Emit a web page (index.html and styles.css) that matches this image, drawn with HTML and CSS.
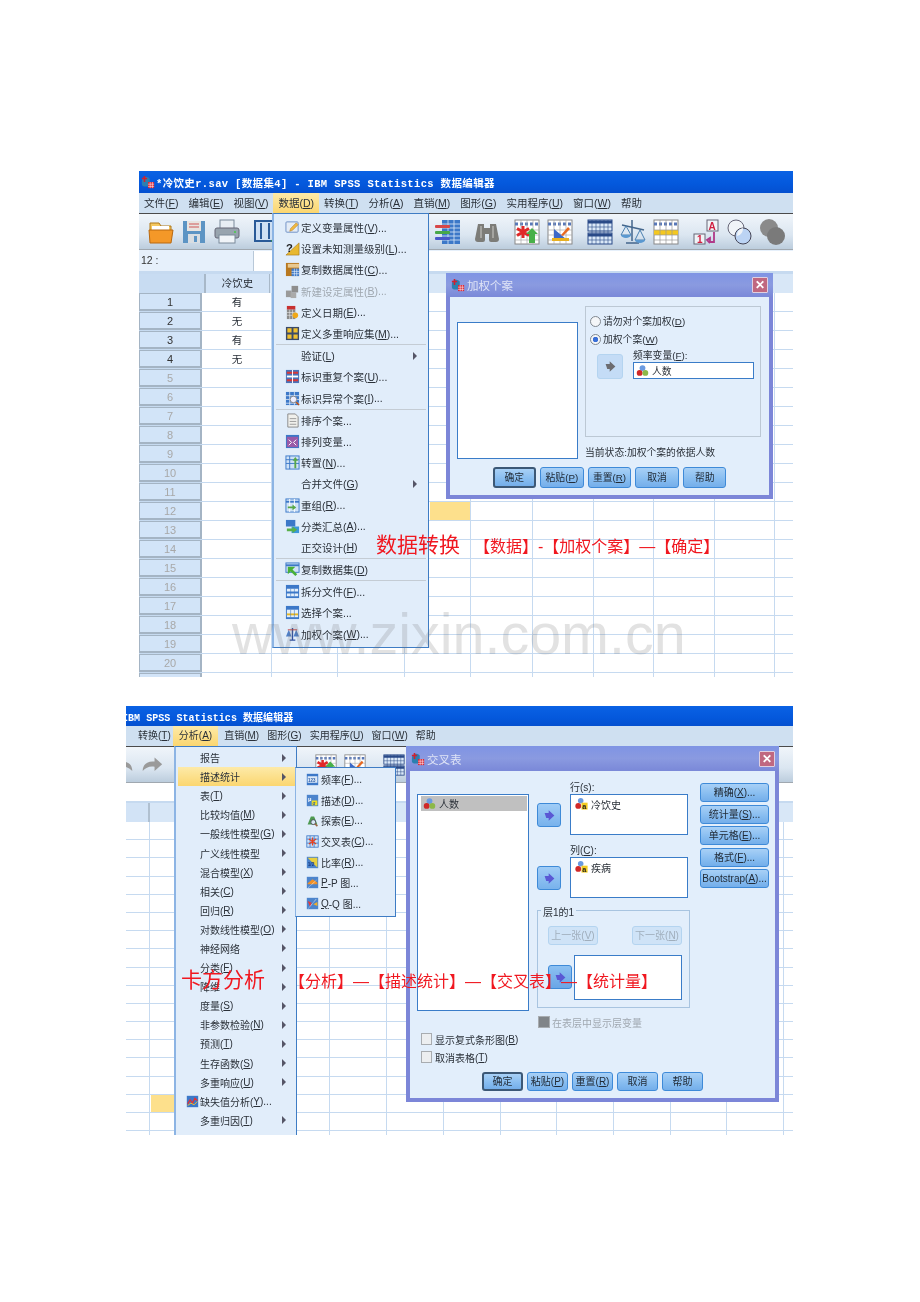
FILE: index.html
```html
<!DOCTYPE html>
<html>
<head>
    <meta charset="utf-8">
    <title>SPSS 数据转换 卡方分析</title>
    <link rel="stylesheet" href="styles.css">
</head>
<body>

<!-- icon set, used with <use> below -->
<svg class="defs" xmlns="http://www.w3.org/2000/svg">
    <symbol id="logo" viewBox="0 0 16 16"><path d="M1 7a5 5 0 0 1 9-3v9H4a3 3 0 0 1-3-3z" fill="#2b7fb0"/><path d="M4 1v7M1 4h6" stroke="#d02030" stroke-width="1.8"/><rect x="8" y="8" width="7" height="7" fill="#d82838"/><path d="M8 10.5h7M8 13h7M10.5 8v7M13 8v7" stroke="#fff" stroke-width=".6"/></symbol>
    <symbol id="ball" viewBox="0 0 16 16"><circle cx="8" cy="5" r="3.6" fill="#6a9ae0"/><circle cx="4.5" cy="11" r="3.6" fill="#d02828"/><circle cx="11.5" cy="11" r="3.6" fill="#8cb848"/></symbol>
    <symbol id="arrow" viewBox="0 0 16 16"><path d="M2 5h5V1.5l7 6.5-7 6.500V11H4z" fill="currentColor"/></symbol>
    <!-- menu icons -->
    <symbol id="m-var" viewBox="0 0 16 16"><rect x="1" y="2" width="13" height="11" rx="1" fill="#e4ecf6" stroke="#6d8fc4"/><path d="M5 12l1-3 6-6 2 2-6 6z" fill="#f0b840" stroke="#b07820" stroke-width=".5"/></symbol>
    <symbol id="m-copy" viewBox="0 0 16 16"><rect x="1" y="1" width="14" height="14" fill="#b87820"/><rect x="3" y="2" width="12" height="4" fill="#e8c890"/><rect x="7" y="7" width="8" height="8" fill="#3c78c8"/><path d="M7 10h8M7 12.5h8M10 7v8M12.5 7v8" stroke="#fff" stroke-width=".6"/></symbol>
    <symbol id="m-new" viewBox="0 0 16 16"><rect x="1" y="7" width="6" height="7" fill="#9a9a9a"/><rect x="6" y="9" width="6" height="6" fill="#aaa"/><rect x="7" y="2" width="7" height="7" fill="#8e8e8e"/></symbol>
    <symbol id="m-date" viewBox="0 0 16 16"><rect x="2" y="1" width="9" height="4" fill="#c83030"/><rect x="2" y="5" width="9" height="10" fill="#8a8a8a"/><path d="M2 8h9M2 11h9M5 5v10M8 5v10" stroke="#eee" stroke-width=".6"/><circle cx="11" cy="11" r="3" fill="#f0a818"/></symbol>
    <symbol id="m-mult" viewBox="0 0 16 16"><rect x="1" y="1" width="14" height="14" fill="#3a4a6a"/><path d="M2.5 2.5h4.5v4.5H2.5zM9 2.5h4.5v4.5H9zM2.5 9h4.5v4.5H2.5zM9 9h4.5v4.5H9z" fill="#f0c030"/></symbol>
    <symbol id="m-dup" viewBox="0 0 16 16"><rect x="1" y="1" width="14" height="14" fill="#4a72b8"/><path d="M2 3h12v2H2zM2 11h12v2H2z" fill="#d83838"/><path d="M2 7h12v2H2z" fill="#fff"/><path d="M8 1v14" stroke="#fff"/></symbol>
    <symbol id="m-odd" viewBox="0 0 16 16"><rect x="1" y="1" width="14" height="14" fill="#3c78c8"/><path d="M1 5h14M1 9h14M1 13h14M5 1v14M10 1v14" stroke="#fff" stroke-width=".7"/><circle cx="9" cy="9" r="3.5" fill="#eef" stroke="#888"/><path d="M12 12l3 3" stroke="#c05010" stroke-width="1.6"/></symbol>
    <symbol id="m-sort" viewBox="0 0 16 16"><path d="M3 1h8l3 3v11H3z" fill="#f0f0ec" stroke="#888"/><path d="M5 6h7M5 9h7M5 12h7" stroke="#999"/></symbol>
    <symbol id="m-rank" viewBox="0 0 16 16"><rect x="1" y="1" width="14" height="14" fill="#3c78c8"/><rect x="2" y="3" width="12" height="11" fill="#9a5aa8"/><path d="M4 6l3 3-3 3M12 6L9 9l3 3" stroke="#fff" fill="none"/></symbol>
    <symbol id="m-trans" viewBox="0 0 16 16"><rect x="1" y="1" width="14" height="14" fill="#cfe2f6" stroke="#3c78c8"/><path d="M1 5h14M1 9h14M5 1v14" stroke="#3c78c8"/><path d="M10 14V6H8l3-4 3 4h-2v8z" fill="#58a848"/></symbol>
    <symbol id="m-regroup" viewBox="0 0 16 16"><rect x="1" y="1" width="14" height="14" fill="#cfe2f6" stroke="#3c78c8"/><path d="M1 4h14" stroke="#3c78c8" stroke-width="2"/><path d="M5 1v14M10 1v14" stroke="#fff"/><path d="M3 9h5V7l4 3-4 3v-2H3z" fill="#58a848"/></symbol>
    <symbol id="m-agg" viewBox="0 0 16 16"><rect x="1" y="1" width="10" height="7" fill="#3c78c8"/><rect x="7" y="8" width="8" height="7" fill="#3c98d8"/><path d="M2 10h6V8l5 3.5L8 15v-2H2z" fill="#58b048"/></symbol>
    <symbol id="m-set" viewBox="0 0 16 16"><rect x="1" y="1" width="14" height="10" fill="#cfe2f6" stroke="#3c78c8"/><path d="M1 3.500h14" stroke="#3c78c8" stroke-width="2"/><path d="M3 5h8l-3 3 5 5-2 2-5-5-3 3z" fill="#48b038"/></symbol>
    <symbol id="m-split" viewBox="0 0 16 16"><rect x="1" y="1" width="14" height="14" fill="#3c78c8"/><path d="M2 5h12v3H2zM2 10h12v3H2z" fill="#e4effa"/><path d="M6 5v8M10 5v8" stroke="#3c78c8" stroke-width=".6"/></symbol>
    <symbol id="m-select" viewBox="0 0 16 16"><rect x="1" y="1" width="14" height="14" fill="#3c78c8"/><path d="M2 5h12v8H2z" fill="#e4effa"/><path d="M2 9h12v2H2z" fill="#e8b820"/><path d="M6 5v8M10 5v8" stroke="#3c78c8" stroke-width=".6"/></symbol>
    <symbol id="m-weight" viewBox="0 0 16 16"><path d="M8 1v13M5 14h6" stroke="#3050a0" stroke-width="1.4"/><path d="M4 3L1 10h6zM12 3l-3 7h6z" fill="#5080c8"/><path d="M3 3h10" stroke="#c04040"/></symbol>
    <symbol id="m-miss" viewBox="0 0 16 16"><rect x="1" y="1" width="14" height="14" fill="#3c78c8"/><path d="M2 11l3-5 3 4 3-6 3 3" stroke="#e83030" stroke-width="1.5" fill="none"/><path d="M2 13l4-3 4 2 4-4" stroke="#f0c030" stroke-width="1.2" fill="none"/></symbol>
    <symbol id="s-explore" viewBox="0 0 16 16"><path d="M2 13l4-10h4l4 10z" fill="#4e9a50"/><circle cx="9" cy="10" r="3" fill="#d8e8f4" stroke="#445"/><path d="M11 12l3 3" stroke="#964" stroke-width="2"/></symbol>
    <symbol id="s-cross" viewBox="0 0 16 16"><rect x="1" y="1" width="14" height="14" fill="#cfe2f6" stroke="#3c78c8"/><path d="M1 5h14M1 10h14M5 1v14M10 1v14" stroke="#3c78c8"/><path d="M8 3v10M3.500 5l9 6M12.500 5l-9 6" stroke="#e84020" stroke-width="1.5"/></symbol>
    <symbol id="s-pp" viewBox="0 0 16 16"><rect x="1" y="1" width="14" height="14" fill="#4c84cc"/><path d="M2 9l6-5 6 4v2H2z" fill="#f09028"/><path d="M3 14l10-9" stroke="#fff" stroke-dasharray="1 1"/></symbol>
    <symbol id="s-qq" viewBox="0 0 16 16"><rect x="1" y="1" width="14" height="14" fill="#4c84cc"/><path d="M2 5l5 2-2 5z" fill="#e83838"/><path d="M9 9l5-3v5z" fill="#f0b028"/><path d="M3 14l10-12" stroke="#fff" stroke-dasharray="1 1"/></symbol>
    <!-- toolbar icons -->
    <symbol id="t-open" viewBox="0 0 26 26"><path d="M2 4h9l2 3h10v5H2z" fill="#f4c860" stroke="#b07818"/><path d="M4 7h17v4H4z" fill="#fff"/><path d="M1 11h24l-2 13H2z" fill="#f49828" stroke="#b86810"/></symbol>
    <symbol id="t-save" viewBox="0 0 26 26"><path d="M2 2h22v22H2z" fill="#5c94c4"/><rect x="6" y="2" width="14" height="10" fill="#e8e4e0"/><path d="M8 5h10M8 8h10" stroke="#d05858"/><rect x="7" y="15" width="12" height="9" fill="#d8dde2"/><rect x="13" y="17" width="3" height="6" fill="#5c94c4"/></symbol>
    <symbol id="t-print" viewBox="0 0 26 26"><rect x="6" y="1" width="14" height="10" fill="#e8eef4" stroke="#7a8a9a"/><rect x="1" y="9" width="24" height="10" rx="2" fill="#98a4ae" stroke="#667"/><circle cx="21" cy="13" r="1" fill="#4c4"/><rect x="5" y="16" width="16" height="8" fill="#f0f4f8" stroke="#7a8a9a"/></symbol>
    <symbol id="t-vars" viewBox="0 0 26 26"><rect x="1" y="2" width="22" height="20" fill="#cfe0f4" stroke="#2a5a98" stroke-width="2"/><path d="M7 4v16M15 4v16" stroke="#2a5a98" stroke-width="2"/><path d="M17 22l4-6 4 6-4 3z" fill="#38a038"/></symbol>
    <symbol id="t-cols" viewBox="0 0 26 26"><rect x="8" y="1" width="18" height="24" fill="#3c78c8"/><path d="M8 5h18M8 9h18M8 13h18M8 17h18M8 21h18M14 1v24M20 1v24" stroke="#dbe9f8" stroke-width=".8"/><rect x="1" y="6" width="15" height="3" rx="1" fill="#d84848"/><rect x="1" y="12" width="15" height="3" rx="1" fill="#48a848"/><rect x="1" y="18" width="15" height="3" rx="1" fill="#4858c8"/></symbol>
    <symbol id="t-bino" viewBox="0 0 26 26"><path d="M4 5h6v4h6V5h6l3 15a3 3 0 0 1-3 3h-5a2 2 0 0 1-2-2v-6h-4v6a2 2 0 0 1-2 2H4a3 3 0 0 1-3-3z" fill="#7c7c78"/><path d="M6 7h2v12H6zM18 7h2v12h-2z" fill="#a4a4a0"/></symbol>
    <symbol id="t-star" viewBox="0 0 26 26"><rect x="1" y="1" width="24" height="24" fill="#fff" stroke="#888"/><path d="M1 5h24" stroke="#5878b8" stroke-width="3" stroke-dasharray="3 2"/><path d="M1 11h24M1 16h24M1 21h24M7 1v24M13 1v24M19 1v24" stroke="#aaa" stroke-width=".7"/><path d="M9 7v12M3 9.5l12 7M15 9.5l-12 7" stroke="#e02828" stroke-width="3"/><path d="M15 24V15h-3l6-6 6 6h-3v9z" fill="#48b048"/></symbol>
    <symbol id="t-chart" viewBox="0 0 26 26"><rect x="1" y="1" width="24" height="24" fill="#fff" stroke="#888"/><path d="M1 5h24" stroke="#5878b8" stroke-width="3" stroke-dasharray="3 2"/><path d="M1 11h24M1 16h24M1 21h24M7 1v24M13 1v24M19 1v24" stroke="#aaa" stroke-width=".7"/><path d="M7 10v10h12z" fill="#3c68c8"/><path d="M5 19h17v3H5z" fill="#e8b020"/><path d="M14 16l7-8 2 2-7 7z" fill="#e86820"/></symbol>
    <symbol id="t-tables" viewBox="0 0 26 26"><rect x="1" y="1" width="24" height="11" fill="#dbe9f8" stroke="#2a4a88"/><rect x="1" y="14" width="24" height="11" fill="#dbe9f8" stroke="#2a4a88"/><path d="M1 3h24M1 16h24" stroke="#2a4a88" stroke-width="3"/><path d="M1 8h24M1 21h24M5 1v24M9 1v24M13 1v24M17 1v24M21 1v24" stroke="#2a4a88" stroke-width=".6"/></symbol>
    <symbol id="t-scale" viewBox="0 0 26 26"><path d="M12 1v21M6 24h13" stroke="#44668c" stroke-width="1.5"/><path d="M2 6l22 5" stroke="#44668c" stroke-width="1.5"/><path d="M6 7L1 16h10zM20 11l-5 10h10z" fill="none" stroke="#4a80b0"/><path d="M1 16h10a5 3 0 0 1-10 0zM15 21h10a5 3 0 0 1-10 0z" fill="#5a98d0"/></symbol>
    <symbol id="t-yellow" viewBox="0 0 26 26"><rect x="1" y="1" width="24" height="24" fill="#fff" stroke="#888"/><path d="M1 5h24" stroke="#5878b8" stroke-width="3" stroke-dasharray="3 2"/><path d="M1 11h24v5H1z" fill="#f4c820"/><path d="M1 11h24M1 16h24M1 21h24M7 1v24M13 1v24M19 1v24" stroke="#999" stroke-width=".7"/></symbol>
    <symbol id="t-circ" viewBox="0 0 26 26"><circle cx="10" cy="9" r="8" fill="#f0f4f8" stroke="#667"/><circle cx="17" cy="17" r="8" fill="#bcd4f4" stroke="#445"/><path d="M11 17a8 8 0 0 1 6-8 8 8 0 0 1-6 8" fill="#f0f4f8"/></symbol>
    <symbol id="t-grey" viewBox="0 0 26 26"><circle cx="10" cy="9" r="9" fill="#8a8a8a"/><circle cx="17" cy="17" r="9" fill="#7a7a7a"/></symbol>
    <symbol id="t-redo" viewBox="0 0 26 26"><path d="M2 20c0-8 6-12 14-11V4l9 8-9 8v-5c-6-1-10 1-14 5z" fill="#9a9a9a"/></symbol>
    <symbol id="t-undo" viewBox="0 0 26 26"><path d="M24 20c0-8-6-12-14-11V4l-9 8 9 8v-5c6-1 10 1 14 5z" fill="#9a9a9a"/></symbol>
</svg>

<!-- first screenshot: 数据转换 -->
<div class="shot shot-a">
    <div class="titlebar"><svg class="logo"><use href="#logo"/></svg><span>*冷饮史r.sav [数据集4] - IBM SPSS Statistics 数据编辑器</span></div>
    <div class="menubar">
        <span>文件(<u>F</u>)</span><span>编辑(<u>E</u>)</span><span>视图(<u>V</u>)</span><span class="on">数据(<u>D</u>)</span><span>转换(<u>T</u>)</span><span>分析(<u>A</u>)</span><span>直销(<u>M</u>)</span><span>图形(<u>G</u>)</span><span>实用程序(<u>U</u>)</span><span>窗口(<u>W</u>)</span><span>帮助</span>
    </div>
    <div class="toolbar">
        <svg class="tb"><use href="#t-open"/></svg>
        <svg class="tb"><use href="#t-save"/></svg>
        <svg class="tb"><use href="#t-print"/></svg>
        <svg class="tb sep"><use href="#t-vars"/></svg>
        <svg class="tb far"><use href="#t-cols"/></svg>
        <svg class="tb sep"><use href="#t-bino"/></svg>
        <svg class="tb sep"><use href="#t-star"/></svg>
        <svg class="tb"><use href="#t-chart"/></svg>
        <svg class="tb sep"><use href="#t-tables"/></svg>
        <svg class="tb"><use href="#t-scale"/></svg>
        <svg class="tb"><use href="#t-yellow"/></svg>
        <svg class="tb sep" viewBox="0 0 26 26"><rect x="14" y="1" width="11" height="11" fill="#f0f4f8" stroke="#667"/><text x="15.5" y="10.5" class="svg-red">A</text><rect x="1" y="15" width="11" height="10" fill="#f0f4f8" stroke="#667"/><text x="4" y="24" class="svg-red">1</text><path d="M21 13v10h-4v-4l-3 2 3 3" stroke="#b03888" stroke-width="1.8" fill="none"/></svg>
        <svg class="tb"><use href="#t-circ"/></svg>
        <svg class="tb"><use href="#t-grey"/></svg>
    </div>
    <div class="formula"><span class="cellref">12 :</span><span class="cellval"></span></div>
    <div class="sheethead">
        <span class="corner"></span><span class="colname">冷饮史</span><span class="colrest"></span>
    </div>
    <div class="rows">
        <div class="row"><span class="rh">1</span><span class="c">有</span></div>
        <div class="row"><span class="rh">2</span><span class="c">无</span></div>
        <div class="row"><span class="rh">3</span><span class="c">有</span></div>
        <div class="row"><span class="rh">4</span><span class="c">无</span></div>
        <div class="row"><span class="rh off">5</span></div>
        <div class="row"><span class="rh off">6</span></div>
        <div class="row"><span class="rh off">7</span></div>
        <div class="row"><span class="rh off">8</span></div>
        <div class="row"><span class="rh off">9</span></div>
        <div class="row"><span class="rh off">10</span></div>
        <div class="row"><span class="rh off">11</span></div>
        <div class="row"><span class="rh off">12</span><span class="picked"></span></div>
        <div class="row"><span class="rh off">13</span></div>
        <div class="row"><span class="rh off">14</span></div>
        <div class="row"><span class="rh off">15</span></div>
        <div class="row"><span class="rh off">16</span></div>
        <div class="row"><span class="rh off">17</span></div>
        <div class="row"><span class="rh off">18</span></div>
        <div class="row"><span class="rh off">19</span></div>
        <div class="row"><span class="rh off">20</span></div>
        <div class="row"><span class="rh off"></span></div>
    </div>

    <div class="menu data-menu">
        <div class="mi"><svg class="mico"><use href="#m-var"/></svg>定义变量属性(<u>V</u>)...</div>
        <div class="mi"><svg class="mico" viewBox="0 0 16 16"><path d="M1 15h14V2z" fill="#e8b830" stroke="#a07010" stroke-width=".6"/><text x="1" y="12" class="svg-q">?</text></svg>设置未知测量级别(<u>L</u>)...</div>
        <div class="mi"><svg class="mico"><use href="#m-copy"/></svg>复制数据属性(<u>C</u>)...</div>
        <div class="mi off"><svg class="mico"><use href="#m-new"/></svg>新建设定属性(<u>B</u>)...</div>
        <div class="mi"><svg class="mico"><use href="#m-date"/></svg>定义日期(<u>E</u>)...</div>
        <div class="mi"><svg class="mico"><use href="#m-mult"/></svg>定义多重响应集(<u>M</u>)...</div>
        <hr>
        <div class="mi sub"><span class="mico"></span>验证(<u>L</u>)</div>
        <div class="mi"><svg class="mico"><use href="#m-dup"/></svg>标识重复个案(<u>U</u>)...</div>
        <div class="mi"><svg class="mico"><use href="#m-odd"/></svg>标识异常个案(<u>I</u>)...</div>
        <hr>
        <div class="mi"><svg class="mico"><use href="#m-sort"/></svg>排序个案...</div>
        <div class="mi"><svg class="mico"><use href="#m-rank"/></svg>排列变量...</div>
        <div class="mi"><svg class="mico"><use href="#m-trans"/></svg>转置(<u>N</u>)...</div>
        <div class="mi sub"><span class="mico"></span>合并文件(<u>G</u>)</div>
        <div class="mi"><svg class="mico"><use href="#m-regroup"/></svg>重组(<u>R</u>)...</div>
        <div class="mi"><svg class="mico"><use href="#m-agg"/></svg>分类汇总(<u>A</u>)...</div>
        <div class="mi"><span class="mico"></span>正交设计(<u>H</u>)</div>
        <hr>
        <div class="mi"><svg class="mico"><use href="#m-set"/></svg>复制数据集(<u>D</u>)</div>
        <hr>
        <div class="mi"><svg class="mico"><use href="#m-split"/></svg>拆分文件(<u>F</u>)...</div>
        <div class="mi"><svg class="mico"><use href="#m-select"/></svg>选择个案...</div>
        <div class="mi"><svg class="mico"><use href="#m-weight"/></svg>加权个案(<u>W</u>)...</div>
    </div>

    <div class="dialog weight-dlg">
        <div class="dlg-title"><svg class="logo"><use href="#logo"/></svg><span>加权个案</span><b class="close">✕</b></div>
        <div class="weight-body">
            <div class="weight-top">
                <div class="listbox weight-list"></div>
                <div class="weight-right">
                    <div class="groupbox">
                        <label class="radio"><i class="dot"></i>请勿对个案加权(<u>D</u>)</label>
                        <label class="radio"><i class="dot sel"></i>加权个案(<u>W</u>)</label>
                        <div class="freq">
                            <span class="arrbtn pale"><svg class="arr"><use href="#arrow"/></svg></span>
                            <div class="freq-field">
                                <div class="lbl">频率变量(<u>F</u>):</div>
                                <div class="inputbox"><svg class="varico"><use href="#ball"/></svg>人数</div>
                            </div>
                        </div>
                    </div>
                    <div class="status">当前状态:加权个案的依据人数</div>
                </div>
            </div>
            <div class="btnrow">
                <span class="btn def">确定</span><span class="btn">粘贴(<u>P</u>)</span><span class="btn">重置(<u>R</u>)</span><span class="btn">取消</span><span class="btn">帮助</span>
            </div>
        </div>
    </div>

    <div class="note note-a"><span class="note-big">数据转换</span><span class="note-path">【数据】-【加权个案】—【确定】</span></div>
    <div class="watermark">www.zixin.com.cn</div>
</div>

<!-- second screenshot: 卡方分析 -->
<div class="shot shot-b">
    <div class="titlebar"><span class="cut">IBM SPSS Statistics 数据编辑器</span></div>
    <div class="menubar">
        <span>转换(<u>T</u>)</span><span class="on">分析(<u>A</u>)</span><span>直销(<u>M</u>)</span><span>图形(<u>G</u>)</span><span>实用程序(<u>U</u>)</span><span>窗口(<u>W</u>)</span><span>帮助</span>
    </div>
    <div class="toolbar">
        <svg class="tb"><use href="#t-undo"/></svg>
        <svg class="tb"><use href="#t-redo"/></svg>
        <svg class="tb far"><use href="#t-bino"/></svg>
        <svg class="tb sep"><use href="#t-star"/></svg>
        <svg class="tb"><use href="#t-chart"/></svg>
        <svg class="tb sep"><use href="#t-tables"/></svg>
    </div>
    <div class="formula"></div>
    <div class="sheethead">
        <span class="corner"></span><span class="colrest"></span>
    </div>
    <div class="rows">
        <div class="row"></div><div class="row"></div><div class="row"></div><div class="row"></div><div class="row"></div><div class="row"></div>
        <div class="row"></div><div class="row"></div><div class="row"></div><div class="row"></div><div class="row"></div><div class="row"></div>
        <div class="row"></div><div class="row"></div><div class="row"></div>
        <div class="row"><span class="picked"></span></div>
        <div class="row"></div><div class="row"></div>
    </div>

    <div class="menu analyze-menu">
        <div class="mi sub">报告</div>
        <div class="mi sub hot">描述统计</div>
        <div class="mi sub">表(<u>T</u>)</div>
        <div class="mi sub">比较均值(<u>M</u>)</div>
        <div class="mi sub">一般线性模型(<u>G</u>)</div>
        <div class="mi sub">广义线性模型</div>
        <div class="mi sub">混合模型(<u>X</u>)</div>
        <div class="mi sub">相关(<u>C</u>)</div>
        <div class="mi sub">回归(<u>R</u>)</div>
        <div class="mi sub">对数线性模型(<u>O</u>)</div>
        <div class="mi sub">神经网络</div>
        <div class="mi sub">分类(<u>F</u>)</div>
        <div class="mi sub">降维</div>
        <div class="mi sub">度量(<u>S</u>)</div>
        <div class="mi sub">非参数检验(<u>N</u>)</div>
        <div class="mi sub">预测(<u>T</u>)</div>
        <div class="mi sub">生存函数(<u>S</u>)</div>
        <div class="mi sub">多重响应(<u>U</u>)</div>
        <div class="mi miss"><svg class="mico"><use href="#m-miss"/></svg>缺失值分析(<u>Y</u>)...</div>
        <div class="mi sub">多重归因(<u>T</u>)</div>
        <div class="mi sub">复杂抽样</div>
    </div>

    <div class="menu stats-menu">
        <div class="mi"><svg class="mico" viewBox="0 0 16 16"><rect x="1" y="1" width="14" height="14" fill="#3c78c8"/><rect x="2" y="4" width="12" height="8" fill="#dde9f7"/><text x="2.5" y="10.5" class="svg-n">123</text></svg>频率(<u>F</u>)...</div>
        <div class="mi"><svg class="mico" viewBox="0 0 16 16"><rect x="1" y="1" width="14" height="14" fill="#4c84cc"/><rect x="7" y="8" width="7" height="6" fill="#f0e020"/><text x="2.5" y="8" class="svg-w">μ</text><text x="8" y="13.5" class="svg-n">σ</text></svg>描述(<u>D</u>)...</div>
        <div class="mi"><svg class="mico"><use href="#s-explore"/></svg>探索(<u>E</u>)...</div>
        <div class="mi"><svg class="mico"><use href="#s-cross"/></svg>交叉表(<u>C</u>)...</div>
        <div class="mi"><svg class="mico" viewBox="0 0 16 16"><rect x="1" y="1" width="14" height="14" fill="#4c84cc"/><path d="M2 2h12v12z" fill="#e8d040"/><text x="2" y="12" class="svg-d">1/2</text></svg>比率(<u>R</u>)...</div>
        <div class="mi"><svg class="mico"><use href="#s-pp"/></svg><u>P</u>-P 图...</div>
        <div class="mi"><svg class="mico"><use href="#s-qq"/></svg><u>Q</u>-Q 图...</div>
    </div>

    <div class="dialog cross-dlg">
        <div class="dlg-title"><svg class="logo"><use href="#logo"/></svg><span>交叉表</span><b class="close">✕</b></div>
        <div class="cross-body">
            <div class="cross-main">
                <div class="listbox cross-list"><div class="listrow"><svg class="varico"><use href="#ball"/></svg>人数</div></div>
                <div class="cross-mid">
                    <div class="slot">
                        <span class="arrbtn"><svg class="arr"><use href="#arrow"/></svg></span>
                        <div class="slot-field">
                            <div class="lbl">行(s):</div>
                            <div class="listbox slotbox"><svg class="varico" viewBox="0 0 16 16"><circle cx="7" cy="4.5" r="3.4" fill="#6a9ae0"/><circle cx="4" cy="11" r="3.6" fill="#d02828"/><rect x="8" y="7" width="7.5" height="8.5" fill="#f4cc20"/><text x="9" y="14.5" class="svg-a">a</text></svg>冷饮史</div>
                        </div>
                    </div>
                    <div class="slot slot-next">
                        <span class="arrbtn"><svg class="arr"><use href="#arrow"/></svg></span>
                        <div class="slot-field">
                            <div class="lbl">列(<u>C</u>):</div>
                            <div class="listbox slotbox"><svg class="varico" viewBox="0 0 16 16"><circle cx="7" cy="4.5" r="3.4" fill="#6a9ae0"/><circle cx="4" cy="11" r="3.6" fill="#d02828"/><rect x="8" y="7" width="7.5" height="8.5" fill="#f4cc20"/><text x="9" y="14.5" class="svg-a">a</text></svg>疾病</div>
                        </div>
                    </div>
                    <div class="layer">
                        <span class="legend">层1的1</span>
                        <div class="layer-nav"><span class="btn dim">上一张(<u>V</u>)</span><span class="btn dim">下一张(<u>N</u>)</span></div>
                        <div class="layer-slot">
                            <span class="arrbtn"><svg class="arr"><use href="#arrow"/></svg></span>
                            <div class="listbox layerbox"></div>
                        </div>
                    </div>
                    <label class="check dim-check"><i class="box grey"></i>在表层中显示层变量</label>
                </div>
                <div class="cross-side">
                    <span class="btn">精确(<u>X</u>)...</span>
                    <span class="btn">统计量(<u>S</u>)...</span>
                    <span class="btn">单元格(<u>E</u>)...</span>
                    <span class="btn">格式(<u>F</u>)...</span>
                    <span class="btn">Bootstrap(<u>A</u>)...</span>
                </div>
            </div>
            <div class="cross-checks">
                <label class="check"><i class="box"></i>显示复式条形图(<u>B</u>)</label>
                <label class="check"><i class="box"></i>取消表格(<u>T</u>)</label>
            </div>
            <div class="btnrow">
                <span class="btn def">确定</span><span class="btn">粘贴(<u>P</u>)</span><span class="btn">重置(<u>R</u>)</span><span class="btn">取消</span><span class="btn">帮助</span>
            </div>
        </div>
    </div>

    <div class="note note-b"><span class="note-big">卡方分析</span><span class="note-path">【分析】—【描述统计】—【交叉表】—【统计量】</span></div>
</div>

</body>
</html>
```

FILE: styles.css
```css
body {
    margin: 0;
    background: #fff;
    font-family: "Liberation Sans", "Noto Sans CJK SC", sans-serif;
    color: #2a3038;
}

.defs {
    position: absolute;
    width: 0;
    height: 0;
}

/* small text inside icons */
.svg-a {font: bold 9px "Liberation Sans", sans-serif; fill: #222;}
.svg-q {font: bold 12px "Liberation Sans", sans-serif; fill: #222;}
.svg-n {font: bold 5.5px "Liberation Sans", sans-serif; fill: #3060a8;}
.svg-w {font: bold 7px "Liberation Sans", sans-serif; fill: #fff;}
.svg-d {font: bold 6px "Liberation Sans", sans-serif; fill: #1a3a80;}
.svg-red {font: bold 10px "Liberation Sans", sans-serif; fill: #d02040;}

u {text-decoration-thickness: 1px; text-underline-offset: 1px;}

/* the two pasted screenshots */
.shot {
    position: relative;
    overflow: hidden;
    filter: blur(0.5px);
    background: #fff;
}
.shot-a {
    width: 654px;
    height: 506px;
    margin: 171px 0 0 139px;
    font-size: 10.5px;
}
.shot-b {
    width: 667px;
    height: 429px;
    margin: 29px 0 0 126px;
    font-size: 10px;
}

.titlebar {
    display: flex;
    align-items: center;
    height: 22px;
    padding-left: 2px;
    background: linear-gradient(#0a62e4, #0458dc 60%, #0450d0);
    color: #fff;
    font: bold 10.5px "Liberation Mono", "Noto Sans CJK SC", monospace;
    letter-spacing: 0.35px;
    white-space: nowrap;
}
.titlebar .logo {margin-right: 1px;}
.shot-b .titlebar {height: 20px; padding-left: 0; font-size: 10px; letter-spacing: 0.05px;}
.cut {margin-left: -4px;}

.logo {width: 14px; height: 14px; flex: none;}

.menubar {
    display: flex;
    height: 20px;
    background: #cfe0f1;
    line-height: 20px;
}
.shot-a .menubar span {padding: 0 5px;}
.shot-a .menubar span:first-child {margin-left: 0;}
.menubar .on {background: linear-gradient(#fdeaa8, #fbd670);}
.shot-b .menubar span {padding: 0 4px;}
.shot-b .menubar span:first-child {margin-left: 8px; padding-right: 2px;}
.shot-b .menubar .on {padding: 0 6px;}
.shot-b .menubar .on + span {margin-left: 2px;}

.toolbar {
    display: flex;
    align-items: center;
    gap: 7px;
    height: 37px;
    padding-left: 9px;
    box-sizing: border-box;
    border-top: 1px solid #4a4a4a;
    border-bottom: 1px solid #a0a8b0;
    background: linear-gradient(#f0f5fa, #dbe6f1 60%, #bccddd);
}
.tb {width: 26px; height: 26px; flex: none;}
.sep {margin-left: 7px;}
.shot-a .far {margin-left: 147px;}
.shot-b .toolbar {padding-left: 0; margin-left: -14px;}
.shot-b .tb {width: 22px; height: 22px;}
.shot-b .far {margin-left: 106px;}
.shot-b .sep {margin-left: 10px;}

.formula {
    display: flex;
    height: 21px;
    background: #fff;
    border-bottom: 2px solid #c6daf0;
    box-sizing: border-box;
}
.shot-a .formula {height: 24px; padding-top: 1px; border-bottom-width: 3px; background: #e6f0fb;}
.shot-b .formula {height: 20px;}
.cellref {width: 111px; padding-left: 2px; line-height: 19px; color: #333;}
.cellval {flex: 1; margin-left: 1px; background: #fff; border-left: 1px solid #b8c8d8;}

.sheethead {
    display: flex;
    height: 19px;
    background: #d8e7f7;
}
.corner {width: 65px; background: #c8dcf2;}
.colname {
    width: 66px;
    box-sizing: border-box;
    border-left: 2px solid #a8b8c8;
    border-right: 1px solid #a8b8c8;
    background: #d2e3f6;
    text-align: center;
    line-height: 19px;
}
.shot-b .corner {width: 22px; background: #d2e3f6; border-right: 2px solid #b0c0d0;}

/* rule lines of the sheet come from the background */
.rows {
    height: 400px;
    overflow: hidden;
}
.shot-a .rows {
    background:
        repeating-linear-gradient(90deg, #c6daf0 0 1px, transparent 1px 66.3px) 132px 0 / 200px 100% no-repeat,
        repeating-linear-gradient(90deg, #c6daf0 0 1px, transparent 1px 60.6px) 393px 0 / 300px 100% no-repeat;
}
.shot-b .rows {
    background:
        linear-gradient(#c6daf0, #c6daf0) 23px 0 / 1px 100% no-repeat,
        repeating-linear-gradient(90deg, #c6daf0 0 1px, transparent 1px 56.7px) 90px 0 / 600px 100% no-repeat;
}
.row {
    display: flex;
    height: 19px;
    box-sizing: border-box;
    border-bottom: 1px solid #c6daf0;
}
.shot-b .row {height: 18.2px;}
.rh {
    width: 63px;
    margin-right: 2px;
    box-sizing: border-box;
    border: 1px solid #a4b4c4;
    border-width: 1px 2px 2px 1px;
    background: #d2e4f8;
    text-align: center;
    line-height: 16px;
    font-size: 11px;
    color: #333;
}
.rh.off {color: #a8a8a8;}
.c {width: 66px; text-align: center; line-height: 19px; background: #fff;}
.picked {
    width: 40px;
    margin-left: 226px;
    background: #fde08c;
}
.shot-b .picked {width: 24px; margin-left: 25px;}

/* menus */
.menu {
    position: absolute;
    box-sizing: border-box;
    border: 1px solid #3e7cc4;
    border-left: 2px solid #8cb4e4;
    background: #e1edfa;
}
.menu hr {
    height: 1px;
    margin: 0 2px;
    border: 0;
    background: #c4ccd4;
}
.mi {
    position: relative;
    display: flex;
    align-items: center;
    height: 21.2px;
    white-space: nowrap;
}
.mico {width: 15px; height: 15px; margin: 0 1px 0 11px; flex: none;}
.mi.off {color: #a0a8b0;}
.mi.sub::after {
    content: "";
    position: absolute;
    right: 11px;
    top: 50%;
    margin-top: -4px;
    border: 4px solid transparent;
    border-left: 4px solid #556;
    border-right: 0;
}
.data-menu {left: 133px; top: 42px; width: 157px; height: 435px; padding-top: 3px;}

.analyze-menu {left: 48px; top: 40px; width: 123px; height: 400px; padding: 1px 1px 0 2px;}
.analyze-menu .mi {height: 19.1px; padding-left: 22px;}
.analyze-menu .mi.sub::after {right: 9px;}
.analyze-menu .hot {background: linear-gradient(#fdeaa8, #fbd670);}
.analyze-menu .miss {padding-left: 8px;}
.analyze-menu .mico {width: 13px; height: 13px; margin: 0 1px 0 0;}

.stats-menu {left: 169px; top: 61px; width: 101px; height: 150px; padding-top: 1px; border-left-width: 1px; z-index: 2;}
.stats-menu .mi {height: 20.7px;}
.stats-menu .mico {width: 13px; height: 13px; margin: 0 2px 0 10px;}

/* dialogs */
.dialog {
    position: absolute;
    box-sizing: border-box;
    border: 4px solid #7c86d8;
    border-top: 0;
    border-radius: 4px 4px 0 0;
    background: #e2eefb;
}
.dlg-title {
    display: flex;
    align-items: center;
    margin: 0 -4px;
    padding-left: 5px;
    background: linear-gradient(#7f94e4, #8a9ae0 50%, #7a88d8);
    color: #dfe4f6;
    font-size: 11.5px;
}
.dlg-title .logo {margin-right: 2px;}
.close {
    margin-left: auto;
    width: 16px;
    height: 16px;
    box-sizing: border-box;
    border: 1px solid #e0d0e0;
    border-radius: 1px;
    background: #c06880;
    color: #fff;
    font-size: 12px;
    line-height: 14px;
    text-align: center;
}
.weight-dlg {left: 307px; top: 102px; width: 327px; height: 226px; font-size: 9.8px;}
.weight-dlg .dlg-title {height: 24px; padding-right: 5px;}
.cross-dlg {left: 280px; top: 40px; width: 373px; height: 356px; z-index: 3;}
.cross-dlg .dlg-title {height: 25px; padding-right: 4px;}

.listbox {
    box-sizing: border-box;
    border: 1px solid #3a7cc8;
    background: #fff;
}

.btnrow {
    display: flex;
    justify-content: center;
    gap: 4px;
}
.btn {
    display: block;
    box-sizing: border-box;
    border: 1px solid #3e8ad8;
    border-radius: 3px;
    background: linear-gradient(#a8d0f6, #86bcf0 60%, #74aeea);
    text-align: center;
    white-space: nowrap;
    color: #222c38;
}
.btn.def {border: 2px solid #3c5876;}
.btn.dim {border-color: #b4d4f0; background: #cfe3f7; color: #a0aebc;}

.arrbtn {
    display: flex;
    align-items: center;
    justify-content: center;
    box-sizing: border-box;
    width: 24px;
    height: 24px;
    flex: none;
    border: 1px solid #3e8ad8;
    border-radius: 3px;
    background: linear-gradient(#a0ccf6, #78b2ec);
    color: #5a58d4;
}
.arrbtn.pale {border-color: #b4d4f0; background: #c4dcf6; color: #6c6c70;}
.arr {width: 13px; height: 13px;}

.varico {width: 13px; height: 13px; margin: 0 3px 0 2px; flex: none;}

.radio, .check {display: flex; align-items: center;}
.dot {
    width: 9px;
    height: 9px;
    margin-right: 2px;
    border: 1px solid #808890;
    border-radius: 50%;
    background: #f4f6f8;
    flex: none;
}
.dot.sel {background: radial-gradient(circle, #3a70d8 0 2.5px, #f4f6f8 3px);}

/* 加权个案 dialog inside */
.weight-body {padding: 9px 0 0 7px;}
.weight-top {display: flex; gap: 7px;}
.weight-list {width: 121px; height: 137px; margin-top: 16px;}
.weight-right {width: 176px;}
.groupbox {
    box-sizing: border-box;
    height: 131px;
    padding: 5px 0 0 4px;
    border: 1px solid #bcc8d4;
}
.groupbox .radio {height: 18px;}
.freq {display: flex; gap: 10px; margin: 1px 0 0 7px;}
.freq .arrbtn {width: 26px; height: 25px; margin-top: 5px;}
.freq-field {width: 121px;}
.lbl {height: 13px; line-height: 13px; white-space: nowrap;}
.inputbox {
    display: flex;
    align-items: center;
    height: 17px;
    box-sizing: border-box;
    border: 1px solid #3a7cc8;
    background: #fff;
}
.status {margin-top: 9px; line-height: 14px; white-space: nowrap;}
.weight-body .btnrow {margin: 7px 7px 0 0;}
.weight-body .btn {width: 43.6px; height: 21px; line-height: 19px;}
.weight-body .btn.def {line-height: 17px;}

/* 交叉表 dialog inside */
.cross-body {padding-left: 7px;}
.cross-main {display: flex; height: 259px;}
.cross-list {width: 112px; height: 217px; margin-top: 23px; padding: 1px 1px 0 3px;}
.listrow {display: flex; align-items: center; height: 15px; background: #c0c0c0;}
.cross-mid {width: 153px; margin-left: 8px; padding-top: 10px;}
.slot {display: flex; gap: 9px;}
.slot .arrbtn {margin-top: 22px;}
.slot-next {margin-top: 9px;}
.slotbox {display: flex; align-items: flex-start; width: 118px; height: 41px; padding: 2px 0 0 4px;}
.slotbox .varico {margin: 0 3px 0 0;}
.layer {
    position: relative;
    box-sizing: border-box;
    height: 98px;
    margin-top: 12px;
    padding: 15px 7px 0 10px;
    border: 1px solid #a8c4e0;
}
.legend {
    position: absolute;
    left: 3px;
    top: -7px;
    padding: 0 2px;
    background: #e2eefb;
}
.layer-nav {display: flex; justify-content: space-between;}
.layer-nav .btn {width: 50px; height: 19px; line-height: 17px;}
.layer-slot {display: flex; gap: 2px; margin-top: 10px;}
.layer-slot .arrbtn {margin-top: 10px; background: linear-gradient(#8cc0f2, #6aa6e6);}
.layerbox {width: 113px; height: 45px;}
.check {height: 18px;}
.box {
    width: 9px;
    height: 10px;
    margin-right: 3px;
    border: 1px solid #a8acb0;
    background: #eceef0;
    flex: none;
}
.box.grey {width: 10px; height: 10px; margin-right: 2px; background: #808488;}
.dim-check {height: 12px; margin: 8px 0 0 1px; color: #a0a8b0;}
.cross-side {
    display: flex;
    flex-direction: column;
    gap: 2.5px;
    width: 69px;
    margin: 12px 0 0 10px;
}
.cross-side .btn {height: 19px; line-height: 17px;}
.cross-checks {margin-left: 4px;}
.cross-body .btnrow {margin: 6px 7px 0 0;}
.cross-body .btnrow .btn {width: 41px; height: 19px; line-height: 17px;}
.cross-body .btnrow .btn.def {line-height: 15px;}

/* red notes typed over the pictures */
.note {
    position: absolute;
    z-index: 5;
    display: flex;
    align-items: baseline;
    color: #f01820;
    white-space: nowrap;
}
.note-big {font-size: 21px; line-height: 26px;}
.note-path {font-size: 16px;}
.note-a {left: 237px; top: 361px;}
.note-a .note-path {margin-left: 14px;}
.note-b {left: 55px; top: 261px;}
.note-b .note-path {margin-left: 24px;}

.watermark {
    position: absolute;
    z-index: 4;
    left: 93px;
    top: 428px;
    font-size: 57.5px;
    line-height: 70px;
    color: rgba(110, 110, 110, 0.2);
    white-space: nowrap;
}
```
